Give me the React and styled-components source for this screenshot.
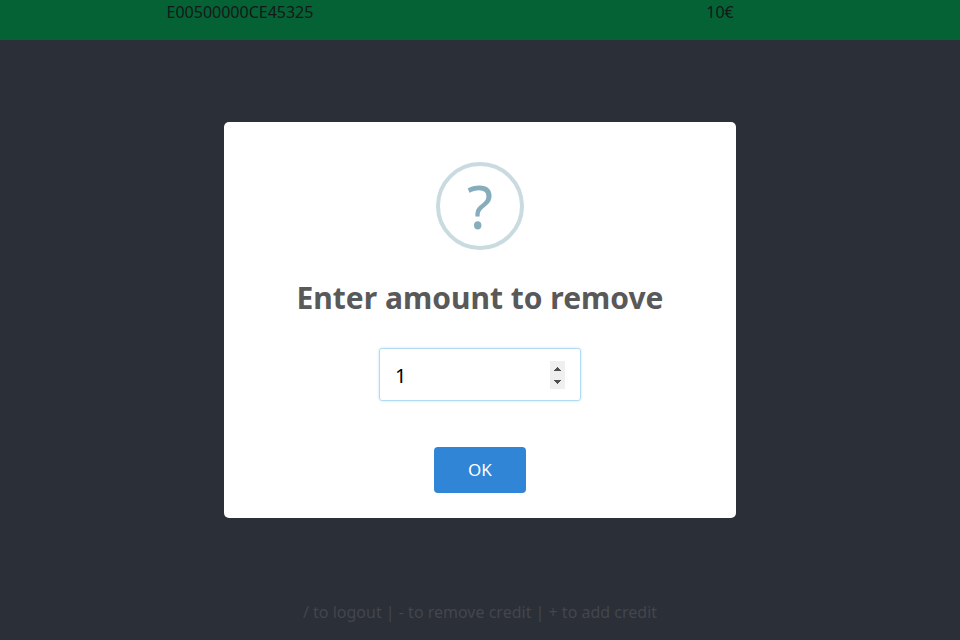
import React, { useState } from "react";
import styled, { createGlobalStyle } from "styled-components";

const GlobalStyle = createGlobalStyle`
  * { box-sizing: border-box; }
  body { margin: 0; background: #2b2f38; font-family: "Noto Sans", sans-serif; overflow: hidden; }
`;
const Page = styled.div`
  height: 640px;
  display: flex;
  flex-direction: column;
  align-items: center;
  background: #2b2f38;
`;
const Header = styled.header`
  width: 100%;
  height: 40px;
  display: grid;
  grid-template-columns: 1fr 1fr;
  background: #056235;
  color: #14181b;
  font-size: 16px;
  line-height: 24px;
  text-align: center;
`;
const Dialog = styled.section`
  width: 512px;
  height: 396px;
  margin-top: 82px;
  padding-top: 40px;
  display: flex;
  flex-direction: column;
  align-items: center;
  background: #fff;
  border-radius: 5px;
`;
const QuestionIcon = styled.div`
  width: 88px;
  height: 88px;
  display: flex;
  align-items: center;
  justify-content: center;
  border: 4px solid #c9dae1;
  border-radius: 50%;
  color: #87adbd;
  font-size: 60px;
  line-height: 80px;
`;
const Title = styled.h2`
  margin: 26px 0 0;
  color: #595959;
  font-size: 30px;
  line-height: 44px;
  font-weight: 700;
`;
const Field = styled.div`
  width: 202px;
  height: 53px;
  margin-top: 28px;
  padding: 0 15px;
  display: flex;
  align-items: center;
  border: 1px solid #b4dbed;
  border-radius: 3px;
  box-shadow: 0 0 3px #c4e6f5;
`;
const AmountInput = styled.input`
  flex: 1;
  min-width: 0;
  height: 51px;
  padding: 1px 0 0;
  border: 0;
  outline: 0;
  background: transparent;
  color: #000;
  font: 20px "Noto Sans", sans-serif;
`;
const Stepper = styled.div`
  width: 15px;
  height: 28px;
  flex: none;
  display: flex;
  flex-direction: column;
  background: #efefef;
`;
const StepButton = styled.button`
  width: 15px;
  height: 14px;
  padding: ${(p) => (p.$down ? "5px 4px" : "6px 4px 4px")};
  display: flex;
  border: 0;
  background: transparent;

  svg {
    display: block;
    flex: none;
  }
`;
const Confirm = styled.button`
  width: 92px;
  height: 46px;
  margin-top: 46px;
  padding: 0 0 2px;
  border: 0;
  border-radius: 4px;
  background: #3085d6;
  color: #fff;
  font: 17px "Noto Sans", sans-serif;
`;
const Hint = styled.footer`
  margin-top: 82px;
  color: #43464c;
  font-size: 16px;
  line-height: 24px;
`;

export default function App() {
  const [amount, setAmount] = useState("1");
  const step = (by) => setAmount(String((Number(amount) || 0) + by));
  return (
    <Page>
      <GlobalStyle />
      <Header><span>E00500000CE45325</span><span>10€</span></Header>
      <Dialog>
        <QuestionIcon>?</QuestionIcon>
        <Title>Enter amount to remove</Title>
        <Field>
          <AmountInput inputMode="numeric" value={amount} onChange={(e) => setAmount(e.target.value)} />
          <Stepper>
            <StepButton aria-label="Increase" onClick={() => step(1)}>
              <svg width="7" height="4" shapeRendering="crispEdges"><path d="M3 0h1v1h1v1h1v1h1v1H0V3h1V2h1V1h1z" fill="#505050" /></svg>
            </StepButton>
            <StepButton $down aria-label="Decrease" onClick={() => step(-1)}>
              <svg width="7" height="4" shapeRendering="crispEdges"><path d="M0 0h7v1H6v1H5v1H4v1H3V3H2V2H1V1H0z" fill="#505050" /></svg>
            </StepButton>
          </Stepper>
        </Field>
        <Confirm>OK</Confirm>
      </Dialog>
      <Hint>/ to logout | - to remove credit | + to add credit</Hint>
    </Page>
  );
}
